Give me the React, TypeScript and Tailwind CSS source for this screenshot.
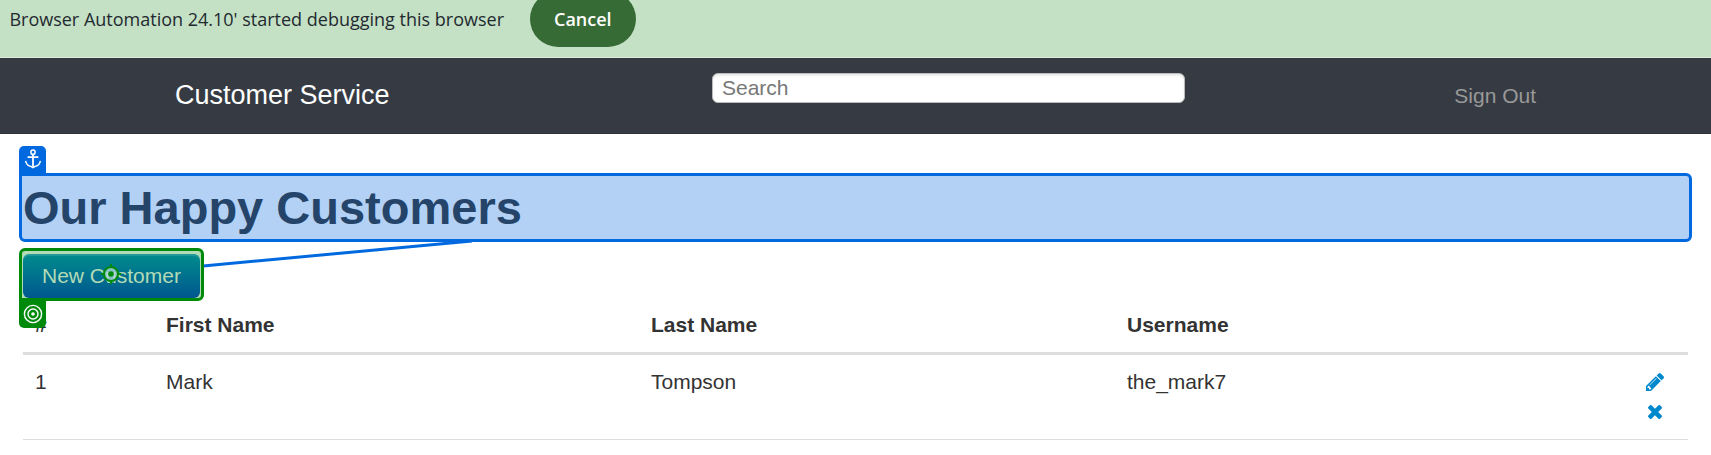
import React from "react";

type Customer = { id: number; first: string; last: string; username: string };

const customers: Customer[] = [
  { id: 1, first: "Mark", last: "Tompson", username: "the_mark7" },
];

function DebugBar() {
  return (
    <div className="flex h-[58px] items-start gap-[26px] overflow-hidden border-b border-[#dcecdc] bg-[#c5e1c5] font-['Open_Sans',sans-serif] text-[18px] leading-[38px] text-[#1f2a30]">
      <div className="flex w-[504px] shrink-0 justify-end whitespace-nowrap">
        Browser Automation 24.10' started debugging this browser
      </div>
      <button className="-mt-[9px] h-14 rounded-full bg-[#376b35] px-6 font-semibold text-white">
        Cancel
      </button>
    </div>
  );
}

function NavBar() {
  return (
    <nav className="grid h-[76px] grid-cols-[712fr_473fr_526fr] items-center border-b border-[#2f3236] bg-[#363b43]">
      <div className="pl-[175px]">
        <a href="#" className="text-[27px] text-white">
          Customer Service
        </a>
      </div>
      <input
        type="text"
        aria-label="Search"
        placeholder="Search"
        className="mb-4 h-[30px] w-full min-w-0 rounded-md border border-[#bbbbbb] bg-white px-[9px] text-[21px] shadow-[inset_0_2px_2px_rgba(0,0,0,0.08)] placeholder:text-[#777777]"
      />
      <div className="flex justify-end pr-[175px]">
        <a href="#" className="text-[#999999]">
          Sign Out
        </a>
      </div>
    </nav>
  );
}

function AnchorIcon() {
  return (
    <svg viewBox="0 0 20 20" className="size-5" fill="none" stroke="white" strokeWidth="1.5" aria-hidden="true">
      <circle cx="10" cy="3.2" r="2.1" />
      <path d="M10 5.3v12.5M4.600 8.200h10.800" strokeWidth="1.8" />
      <path d="M2.600 11.800c.6 3.400 3 5.300 5.600 5.700l1.800 1.100 1.800-1.100c2.600-.4 5-2.300 5.600-5.700" />
    </svg>
  );
}

function TargetIcon() {
  return (
    <svg viewBox="0 0 20 20" className="size-5" fill="none" stroke="white" strokeWidth="1.4" aria-hidden="true">
      <circle cx="10" cy="10" r="8.600" />
      <circle cx="10" cy="10" r="5" />
      <circle cx="10" cy="10" r="1.800" fill="white" stroke="none" />
    </svg>
  );
}

function PencilIcon() {
  return (
    <svg viewBox="128 149 1515 1515" className="size-[18px]" fill="currentColor" aria-hidden="true">
      <path d="M491 1536l91-91-235-235-91 91v107h128v128h107zm523-928q0-22-22-22-10 0-17 7l-542 542q-7 7-7 17 0 22 22 22 10 0 17-7l542-542q7-7 7-17zm-54-192l416 416-832 832h-416v-416zm683 96q0 53-37 90l-166 166-416-416 166-165q36-38 90-38 53 0 91 38l235 234q37 39 37 91z" />
    </svg>
  );
}

function RemoveIcon() {
  return (
    <svg viewBox="302 366 1188 1188" className="size-[14px]" fill="currentColor" aria-hidden="true">
      <path d="M1490 1322q0 40-28 68l-136 136q-28 28-68 28t-68-28l-294-294-294 294q-28 28-68 28t-68-28l-136-136q-28-28-28-68t28-68l294-294-294-294q-28-28-28-68t28-68l136-136q28-28 68-28t68 28l294 294 294-294q28-28 68-28t68 28l136 136q28 28 28 68t-28 68l-294 294 294 294q28 28 28 68z" />
    </svg>
  );
}

export default function App() {
  return (
    <div className="font-['Liberation_Sans',Arial,sans-serif] text-[21px] leading-[30px] text-[#333333]">
      <DebugBar />
      <NavBar />
      <main className="px-[23px] pt-[42px]">
        <div className="relative">
          <h1 className="text-[47px] leading-[63px] font-bold text-[#24446a]">
            <span className="relative z-10">Our Happy Customers</span>
          </h1>
          <div className="absolute -inset-x-1 -inset-y-[3px] rounded-md rounded-tl-none border-3 border-[#0069e0] bg-[#b3d1f5]" />
          <div className="absolute -top-[30px] -left-1 flex h-[30px] w-[27px] items-center justify-center rounded-t-[5px] bg-[#0069e0] pb-1">
            <AnchorIcon />
          </div>
        </div>

        <div className="relative mt-[15px] w-fit">
          <svg className="absolute -top-[15px] left-[180px]" width="270" height="30" aria-hidden="true">
            <path d="M0 27L269 2" stroke="#0069e0" strokeWidth="3" />
          </svg>
          <div className="absolute -inset-x-1 -top-[6px] -bottom-[3px] rounded-md rounded-bl-none border-3 border-[#008a0c] bg-[#b3dbb6]" />
          <button className="relative block h-11 rounded-md bg-linear-to-b from-[#048c8c] to-[#00568f] px-[19px] text-[#b3dbb6] shadow-[inset_0_2px_0_rgba(255,255,255,0.12)]">
            New Customer
          </button>
          <svg className="absolute top-[10px] left-[78px] size-5" viewBox="0 0 20 20" fill="none" stroke="#008a0c" strokeWidth="2" aria-hidden="true">
            <circle cx="10" cy="10" r="7" fill="#b3dbd8" fillOpacity="0.75" />
            <path d="M10 0v3M10 17v3M0 10h3M17 10h3" />
            <circle cx="10" cy="10" r="2.800" fill="#008a0c" stroke="none" />
          </svg>
          <div className="absolute top-11 -left-1 z-10 flex h-[30px] w-[27px] items-center justify-center rounded-b-[5px] bg-[#008a0c] pt-[2px]">
            <TargetIcon />
          </div>
        </div>

        <table className="w-full table-fixed border-collapse text-left">
          <thead>
            <tr className="border-b-3 border-[#dddddd]">
              <th className="w-[131px] p-3">#</th>
              <th className="w-[485px] p-3">First Name</th>
              <th className="w-[476px] p-3">Last Name</th>
              <th className="p-3">Username</th>
              <th className="w-[60px] p-3" aria-label="Actions" />
            </tr>
          </thead>
          <tbody>
            {customers.map((c) => (
              <tr key={c.id} className="border-b border-[#dddddd] align-top">
                <td className="p-3">{c.id}</td>
                <td className="p-3">{c.first}</td>
                <td className="p-3">{c.last}</td>
                <td className="p-3">{c.username}</td>
                <td className="py-3 pr-6">
                  <div className="flex flex-col items-end">
                    <button aria-label="Edit" className="flex h-[30px] w-[18px] items-center justify-center text-[#0088cc]">
                      <PencilIcon />
                    </button>
                    <button aria-label="Delete" className="flex h-[30px] w-[18px] items-center justify-center text-[#0088cc]">
                      <RemoveIcon />
                    </button>
                  </div>
                </td>
              </tr>
            ))}
          </tbody>
        </table>
      </main>
    </div>
  );
}
